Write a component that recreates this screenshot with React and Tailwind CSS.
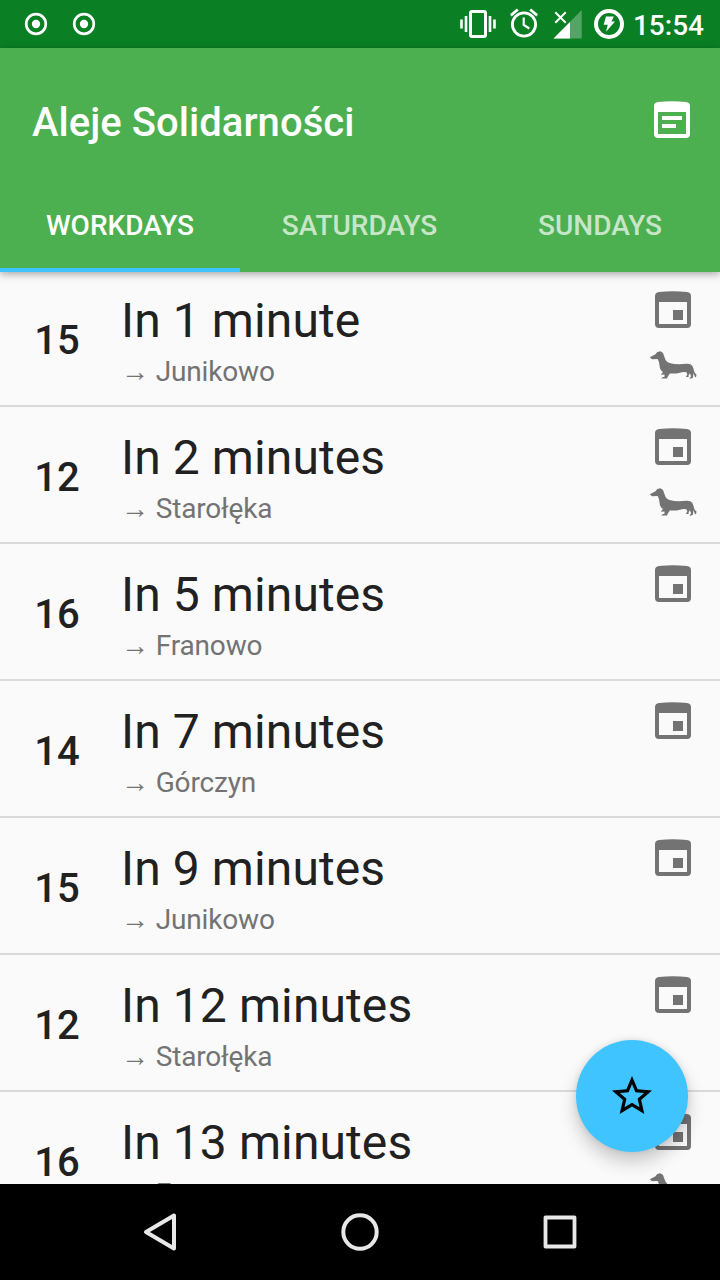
const departures = [
  { line: "15", time: "In 1 minute", to: "Junikowo", dog: true },
  { line: "12", time: "In 2 minutes", to: "Starołęka", dog: true },
  { line: "16", time: "In 5 minutes", to: "Franowo" },
  { line: "14", time: "In 7 minutes", to: "Górczyn" },
  { line: "15", time: "In 9 minutes", to: "Junikowo" },
  { line: "12", time: "In 12 minutes", to: "Starołęka" },
  { line: "16", time: "In 13 minutes", to: "Franowo", dog: true },
];

function RecordIcon() {
  return (
    <svg width="24" height="24" viewBox="0 0 24 24" fill="none">
      <circle cx="12" cy="12" r="9.8" stroke="white" strokeWidth="2.7" />
      <circle cx="12" cy="12" r="4.2" fill="white" />
    </svg>
  );
}

function VibrateIcon() {
  return (
    <svg width="36" height="28" viewBox="0 0 36 28" fill="none">
      <rect x="10.5" y="1.5" width="15" height="25" rx="1.5" stroke="white" strokeWidth="3" />
      <path d="M1.5 9.5v9M34.5 9.5v9M6 6v16M30 6v16" stroke="white" strokeWidth="2.6" />
    </svg>
  );
}

function AlarmIcon() {
  return (
    <svg width="28" height="30" viewBox="0 0 28 30" fill="none" stroke="white">
      <circle cx="14" cy="16.5" r="11.6" strokeWidth="2.8" />
      <path d="M13.7 9.5v7.5l5.6 3.5" strokeWidth="2.2" />
      <path d="M.8 7.3l7-5.8M27.2 7.3l-7-5.8" strokeWidth="2.8" />
    </svg>
  );
}

function SignalIcon() {
  return (
    <svg width="30" height="30" viewBox="0 0 30 30">
      <path d="M1.5 29.5L29.7 1v28.5z" fill="white" fillOpacity=".3" />
      <path d="M1.5 29.5L18 13v16.5z" fill="white" />
      <path d="M3.3 3.3l10.4 10.4M13.7 3.3L3.3 13.7" stroke="white" strokeWidth="2" />
    </svg>
  );
}

function BoltIcon() {
  return (
    <svg width="30" height="30" viewBox="0 0 30 30" fill="none">
      <circle cx="15" cy="15" r="13" stroke="white" strokeWidth="4" />
      <path d="M12 7.500h7.800l-2.300 5H21L12 22.800l1.800-7H9.700z" fill="white" />
    </svg>
  );
}

function NoteIcon() {
  return (
    <svg width="36" height="37" viewBox="0 0 36 37" fill="white">
      <path
        fillRule="evenodd"
        d="M4 1Q18-.6 32 1Q36 1.500 36 5V33Q36 37 32 37H4Q0 37 0 33V5Q0 1.500 4 1zM4 11V33H32V11z"
      />
      <path d="M8 15h20v4H8zM8 23h14v4H8z" />
    </svg>
  );
}

function CalendarIcon() {
  return (
    <svg width="36" height="37" viewBox="0 0 36 37" fill="#737373">
      <path
        fillRule="evenodd"
        d="M4 1Q18-.6 32 1Q36 1.500 36 5V33Q36 37 32 37H4Q0 37 0 33V5Q0 1.500 4 1zM4 11V33H32V11z"
      />
      <path d="M18 19h10v10H18z" />
    </svg>
  );
}

function DogIcon() {
  return (
    <svg width="48" height="30" viewBox="0 0 48 30" fill="#737373">
      <path d="M.8 7.200L6.500 4.200L8.300 2.100L11.500 1.200L14 3L15.600 7.500Q17 12 20.500 13Q25 14.300 30 14.300L37.500 13.800Q41.500 13.500 43.200 15.800Q44.500 18 45 20.800Q45.500 23.500 47.500 24.600L47 27.300L46 27L44.400 23L44 27.500L42.800 28.600H40.300L42.200 26.300L40.800 23.300L39.600 25.300V27H36.800L38.300 24.500L37.500 22.200Q34 21.500 31 22.700Q27 23.800 20.800 23.500L19 26.300L18 28.600H12.200L13.500 27.300L15.500 26.800V24.500L11.800 24.700L14 22Q11 20.500 10.500 15.500Q10.500 12 8.600 9L3 9.200Z" />
    </svg>
  );
}

export default function App() {
  return (
    <div className="relative flex h-[1280px] w-[720px] flex-col overflow-hidden bg-[#fafafa] font-[Roboto,sans-serif]">
      <div className="z-20 flex h-12 shrink-0 items-center bg-[#0a7f24] pl-6 text-white">
        <div className="flex gap-6">
          <RecordIcon />
          <RecordIcon />
        </div>
        <div className="ml-auto flex items-center pr-4">
          <VibrateIcon />
          <div className="ml-3.5 -mt-0.5"><AlarmIcon /></div>
          <div className="ml-[14px]"><SignalIcon /></div>
          <div className="ml-3"><BoltIcon /></div>
          <span className="ml-[9px] mt-[3px] text-[28px] leading-8 font-medium">15:54</span>
        </div>
      </div>

      <header className="z-20 flex h-56 shrink-0 flex-col bg-[#4caf50] text-white shadow-[0_2px_8px_rgba(0,0,0,0.35)]">
        <div className="flex h-[130px] items-center justify-between pr-[30px] pl-8 pt-[16px]">
          <h1 className="mt-1 text-[40px] leading-12 font-medium tracking-[0.04px]">Aleje Solidarności</h1>
          <div className="-mt-[3px]"><NoteIcon /></div>
        </div>
        <nav className="grid h-[94px] grid-cols-3 text-center text-[28px] leading-[96px] font-medium">
          <span className="h-[94px] border-b-4 border-[#40c4ff]">WORKDAYS</span>
          <span className="pr-px text-white/70">SATURDAYS</span>
          <span className="text-white/70">SUNDAYS</span>
        </nav>
      </header>

      <main className="relative h-[912px] shrink-0 overflow-hidden">
        <ul className="-mt-0.5">
          {departures.map((d, i) => (
            <li key={i} className="flex h-[137px] border-b-2 border-[#dadada]">
              <span className="w-[114px] pt-[46px] text-center text-[40px] leading-[50px] font-medium text-[#212121]">{d.line}</span>
              <div className="flex-1 pt-[22px] pl-[7px]">
                <div className="text-[48px] leading-[57px] tracking-[0.1px] text-[#212121]">{d.time}</div>
                <div className="text-[28px] leading-[45px] tracking-[-0.15px] text-[#737373]">→ {d.to}</div>
              </div>
              <div className="flex w-[71px] flex-col pt-[21px]">
                <div className="pl-1.5"><CalendarIcon /></div>
                {d.dog && <div className="mt-[22px]"><DogIcon /></div>}
              </div>
            </li>
          ))}
        </ul>
        <button className="absolute right-8 bottom-8 flex size-28 items-center justify-center rounded-full bg-[#40c4ff] shadow-[0_10px_18px_rgba(0,0,0,0.2),0_0_6px_rgba(0,0,0,0.1)]">
          <svg width="48" height="48" viewBox="0 0 24 24">
            <path d="M22 9.240l-7.190-.620L12 2 9.190 8.630 2 9.240l5.460 4.730L5.820 21 12 17.270 18.180 21l-1.630-7.030L22 9.240zM12 15.400l-3.760 2.270 1-4.280-3.320-2.880 4.380-.380L12 6.100l1.710 4.040 4.380.380-3.320 2.880 1 4.280L12 15.400z" />
          </svg>
        </button>
      </main>

      <footer className="z-20 flex h-24 shrink-0 items-center justify-center gap-[152px] bg-black">
        <svg width="48" height="48" viewBox="0 0 48 48" fill="none" stroke="#e8e8e8" strokeWidth="4" strokeLinejoin="round">
          <path d="M10 24L38 7.500V40.500z" />
        </svg>
        <svg width="48" height="48" viewBox="0 0 48 48" fill="none" stroke="#e8e8e8" strokeWidth="4">
          <circle cx="24" cy="24" r="16.700" />
        </svg>
        <svg width="48" height="48" viewBox="0 0 48 48" fill="none" stroke="#e8e8e8" strokeWidth="3.800" strokeLinejoin="round">
          <rect x="9.500" y="9.500" width="29" height="29" />
        </svg>
      </footer>
    </div>
  );
}
